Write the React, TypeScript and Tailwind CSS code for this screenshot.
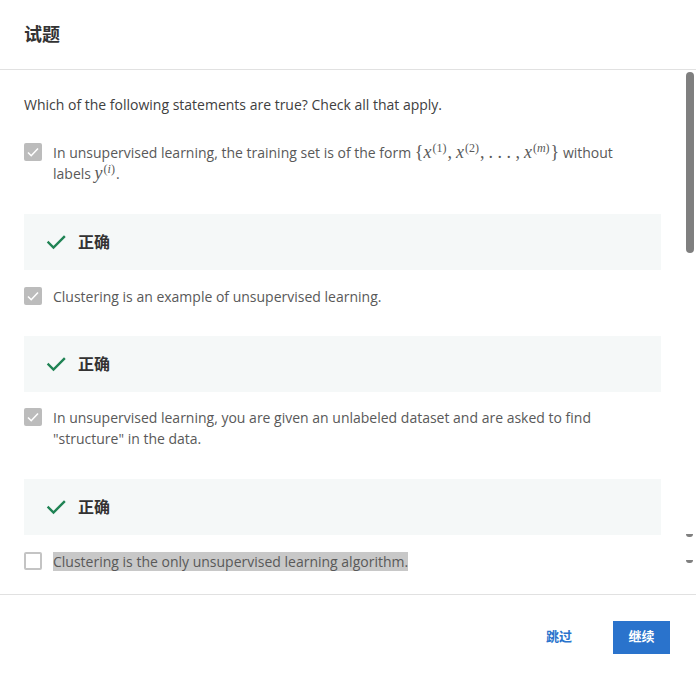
import React from "react";

const Check = ({ className }: { className?: string }) => (
  <svg viewBox="0 0 20 20" className={className} fill="none">
    <path d="M2.5 10.5l5 5L18 5" stroke="currentColor" strokeWidth="2.4" strokeLinecap="square" />
  </svg>
);

const Box = ({ checked }: { checked: boolean }) =>
  checked ? (
    <span className="mt-[1px] flex h-[18px] w-[18px] shrink-0 items-center justify-center rounded-[2px] bg-[#bcbcbc]">
      <svg viewBox="0 0 18 18" className="h-[18px] w-[18px]" fill="none">
        <path d="M4 9.5l3.2 3.2L14 5.5" stroke="#fff" strokeWidth="1.6" />
      </svg>
    </span>
  ) : (
    <span className="mt-[1px] h-[18px] w-[18px] shrink-0 rounded-[2px] border-2 border-[#c4c4c4] bg-white" />
  );

const Correct = () => (
  <div className="flex h-[56px] items-center bg-[#f5f8f8] pl-[22px]">
    <Check className="h-[20px] w-[20px] text-[#1f8354]" />
    <span className="ml-[12px] text-[16px] font-semibold text-[#333]">正确</span>
  </div>
);

const M = ({ children }: { children: React.ReactNode }) => (
  <span className="font-['Liberation_Serif',serif] text-[18px] leading-[0] italic">{children}</span>
);
const Sup = ({ children }: { children: React.ReactNode }) => (
  <sup className="mr-[1px] ml-[1px] font-['Liberation_Serif',serif] text-[12px] leading-[0] not-italic">{children}</sup>
);

const Option = ({ checked, children }: { checked: boolean; children: React.ReactNode }) => (
  <div className="flex gap-[11px]">
    <Box checked={checked} />
    <div className="pr-[12px] text-[14px] leading-[21px] text-[#595959]">{children}</div>
  </div>
);

export default function App() {
  return (
    <div className="flex h-[679px] w-[696px] flex-col bg-white font-['Open_Sans','Noto_Sans_CJK_SC',sans-serif]">
      <div className="flex h-[70px] shrink-0 items-center border-b border-[#e1e1e1] px-[24px]">
        <h1 className="text-[18px] font-bold text-[#333]">试题</h1>
      </div>
      <div className="relative flex-1 overflow-hidden">
        <div className="pl-[24px] pr-[35px] pt-[25px]">
          <p className="text-[14px] leading-[20px] text-[#404040]">
            Which of the following statements are true? Check all that apply.
          </p>
          <div className="mt-[27px]">
            <Option checked>
              In unsupervised learning, the training set is of the form{" "}
              <span className="font-['Liberation_Serif',serif] text-[18px] leading-[0]">
                {"{"}
                <M>x</M>
                <Sup>(1)</Sup>,<span className="inline-block w-[4px]" />
                <M>x</M>
                <Sup>(2)</Sup>,<span className="inline-block w-[4px]" />. . . ,<span className="inline-block w-[4px]" />
                <M>x</M>
                <Sup>
                  (<i>m</i>)
                </Sup>
                {"}"}
              </span>{" "}
              without labels{" "}
              <span className="leading-[0]">
                <M>y</M>
                <Sup>
                  (<i>i</i>)
                </Sup>
              </span>
              .
            </Option>
          </div>
          <div className="mt-[30px]">
            <Correct />
          </div>
          <div className="mt-[16px]">
            <Option checked>Clustering is an example of unsupervised learning.</Option>
          </div>
          <div className="mt-[29px]">
            <Correct />
          </div>
          <div className="mt-[15px]">
            <Option checked>
              In unsupervised learning, you are given an unlabeled dataset and are asked to find "structure" in the
              data.
            </Option>
          </div>
          <div className="mt-[30px]">
            <Correct />
          </div>
          <div className="mt-[16px]">
            <Option checked={false}>
              <span className="bg-[#c8c8c8]">Clustering is the only unsupervised learning algorithm.</span>
            </Option>
          </div>
        </div>
        <div className="absolute right-[2px] top-[2px] h-[181px] w-[8px] rounded-full bg-[#7f7f7f]" />
        <div className="absolute right-[3px] top-[464px] h-[3px] w-[7px] rounded-b-[3px] bg-[#7f7f7f]" />
        <div className="absolute right-[3px] top-[490px] h-[3px] w-[7px] rounded-b-[3px] bg-[#7f7f7f]" />
      </div>
      <div className="flex h-[85px] shrink-0 items-center justify-end gap-[41px] border-t border-[#e1e1e1] pr-[26px]">
        <button type="button" className="text-[13px] font-bold text-[#2a73cc]">
          跳过
        </button>
        <button type="button" className="h-[33px] w-[57px] bg-[#2a73cc] text-[13px] font-bold text-white">
          继续
        </button>
      </div>
    </div>
  );
}
